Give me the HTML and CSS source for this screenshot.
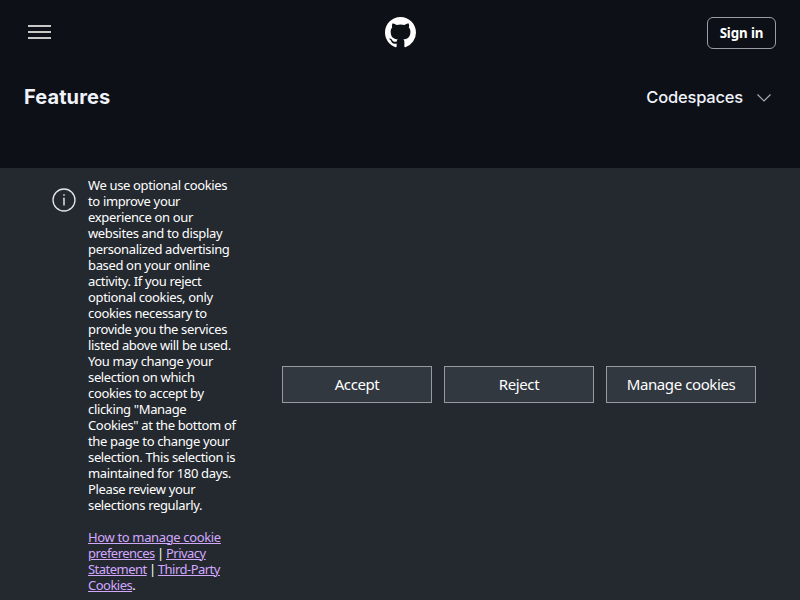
FILE: index.html
```
<!DOCTYPE html>
<html lang="en">
<head>
<meta charset="utf-8">
<title>Features: Codespaces</title>
<link rel="stylesheet" href="styles.css">
</head>
<body>
<header class="header">
  <button class="menu" aria-label="Menu"><span class="bar"></span><span class="bar"></span><span class="bar"></span></button>
  <svg class="logo" viewBox="0 0 16 16" aria-hidden="true"><path d="M8 0C3.58 0 0 3.58 0 8c0 3.54 2.29 6.53 5.47 7.59.4.07.55-.17.55-.38 0-.19-.01-.82-.01-1.49-2.01.37-2.53-.49-2.69-.94-.09-.23-.48-.94-.82-1.13-.28-.15-.68-.52-.01-.53.63-.01 1.08.58 1.23.82.72 1.21 1.87.87 2.33.66.07-.52.28-.87.51-1.07-1.78-.2-3.64-.89-3.64-3.95 0-.87.31-1.59.82-2.15-.08-.2-.36-1.02.08-2.12 0 0 .67-.21 2.2.82.64-.18 1.32-.27 2-.27s1.36.09 2 .27c1.53-1.04 2.2-.82 2.2-.82.44 1.1.16 1.92.08 2.12.51.56.82 1.27.82 2.15 0 3.07-1.87 3.75-3.65 3.95.29.25.54.73.54 1.48 0 1.07-.01 1.93-.01 2.2 0 .21.15.46.55.38A8.01 8.01 0 0 0 16 8c0-4.42-3.58-8-8-8z"/></svg>
  <a class="signin">Sign in</a>
</header>
<nav class="subnav">
  <h1 class="title">Features</h1>
  <div class="current"><span class="current-name">Codespaces</span>
    <svg class="chevron" viewBox="0 0 16 10" aria-hidden="true"><path d="M1.5 1.5 8 8l6.500-6.500"/></svg>
  </div>
</nav>
<section class="cookies">
  <svg class="info" viewBox="0 0 24 24" aria-hidden="true"><circle cx="12" cy="12" r="11"/><path class="stem" d="M11 10.500h1V17.500M12 6.200v1.600"/></svg>
  <p class="message">We use optional cookies<br>to improve your<br>experience on our<br>websites and to display<br>personalized advertising<br>based on your online<br>activity. If you reject<br>optional cookies, only<br>cookies necessary to<br>provide you the services<br>listed above will be used.<br>You may change your<br>selection on which<br>cookies to accept by<br>clicking "Manage<br>Cookies" at the bottom of<br>the page to change your<br>selection. This selection is<br>maintained for 180 days.<br>Please review your<br>selections regularly.<br><br><a>How to manage cookie</a><br><span class="links"><a>preferences</a> | <a>Privacy<br>Statement</a> | <a>Third-Party<br>Cookies</a>.</span></p>
  <div class="actions">
    <button class="choice">Accept</button>
    <button class="choice">Reject</button>
    <button class="choice">Manage cookies</button>
  </div>
</section>
</body>
</html>
```
FILE: styles.css
```
* { box-sizing: border-box; }
body {
  margin: 0;
  height: 600px;
  overflow: hidden;
  background: #0d1117;
  color: #fff;
  font-family: "Noto Sans", sans-serif;
}
.header {
  height: 66px;
  padding: 0 24px 0 28px;
  display: grid;
  grid-template-columns: 1fr 31px 1fr;
  align-items: center;
}
.menu {
  width: 23px;
  height: 14px;
  margin-top: -2px;
  padding: 0;
  border: 0;
  background: none;
  display: flex;
  flex-direction: column;
  justify-content: space-between;
}
.bar { width: 23px; height: 2px; background: #c6c9c6; }
.logo { width: 31px; height: 31px; margin: -2px 0 0 -2px; fill: #fff; }
.signin {
  justify-self: end;
  width: 69px;
  height: 32px;
  border: 1px solid #9a9ea5;
  border-radius: 6px;
  font-size: 13.3px;
  font-weight: 700;
  line-height: 31px;
  text-align: center;
  letter-spacing: -0.1px;
}
.subnav {
  height: 102px;
  padding: 18px 28px 0 24px;
  display: flex;
  justify-content: space-between;
  align-items: flex-start;
  color: #f0f3fa;
  font-family: Inter, sans-serif;
}
.title { margin: 0; font-size: 20px; font-weight: 700; line-height: 26px; letter-spacing: 0.1px; }
.current { display: flex; align-items: center; gap: 13px; height: 26px; }
.current-name { font-size: 16.5px; font-weight: 500; letter-spacing: -0.2px; }
.chevron { width: 16px; height: 10px; margin-top: 2px; fill: none; stroke: #a9adb5; stroke-width: 1.2; }
.cookies {
  height: 432px;
  padding: 9px 44px 0 52px;
  display: flex;
  background: #24292f;
}
.info { flex: none; width: 24px; height: 24px; margin-top: 11px; fill: none; stroke: #e6e6e6; stroke-width: 1.3; }
.stem { stroke: #c8cacc; stroke-width: 1.7; }
.message {
  flex: none;
  width: 194px;
  margin: 0 0 0 12px;
  font-size: 13px;
  line-height: 16px;
  letter-spacing: -0.35px;
  white-space: nowrap;
}
.message a { color: #d2a8ff; text-decoration: underline; text-decoration-thickness: 1px; text-underline-offset: 1px; }
.links { letter-spacing: -0.52px; word-spacing: -0.6px; }
.actions { flex: 1; height: 37px; margin-top: 189px; display: grid; grid-template-columns: repeat(3, 1fr); gap: 12px; }
.choice {
  padding: 0 0 2px;
  border: 1px solid #979ba0;
  background: #32383f;
  color: #fff;
  font-family: "Noto Sans", sans-serif;
  font-size: 15px;
  letter-spacing: -0.4px;
}
```
